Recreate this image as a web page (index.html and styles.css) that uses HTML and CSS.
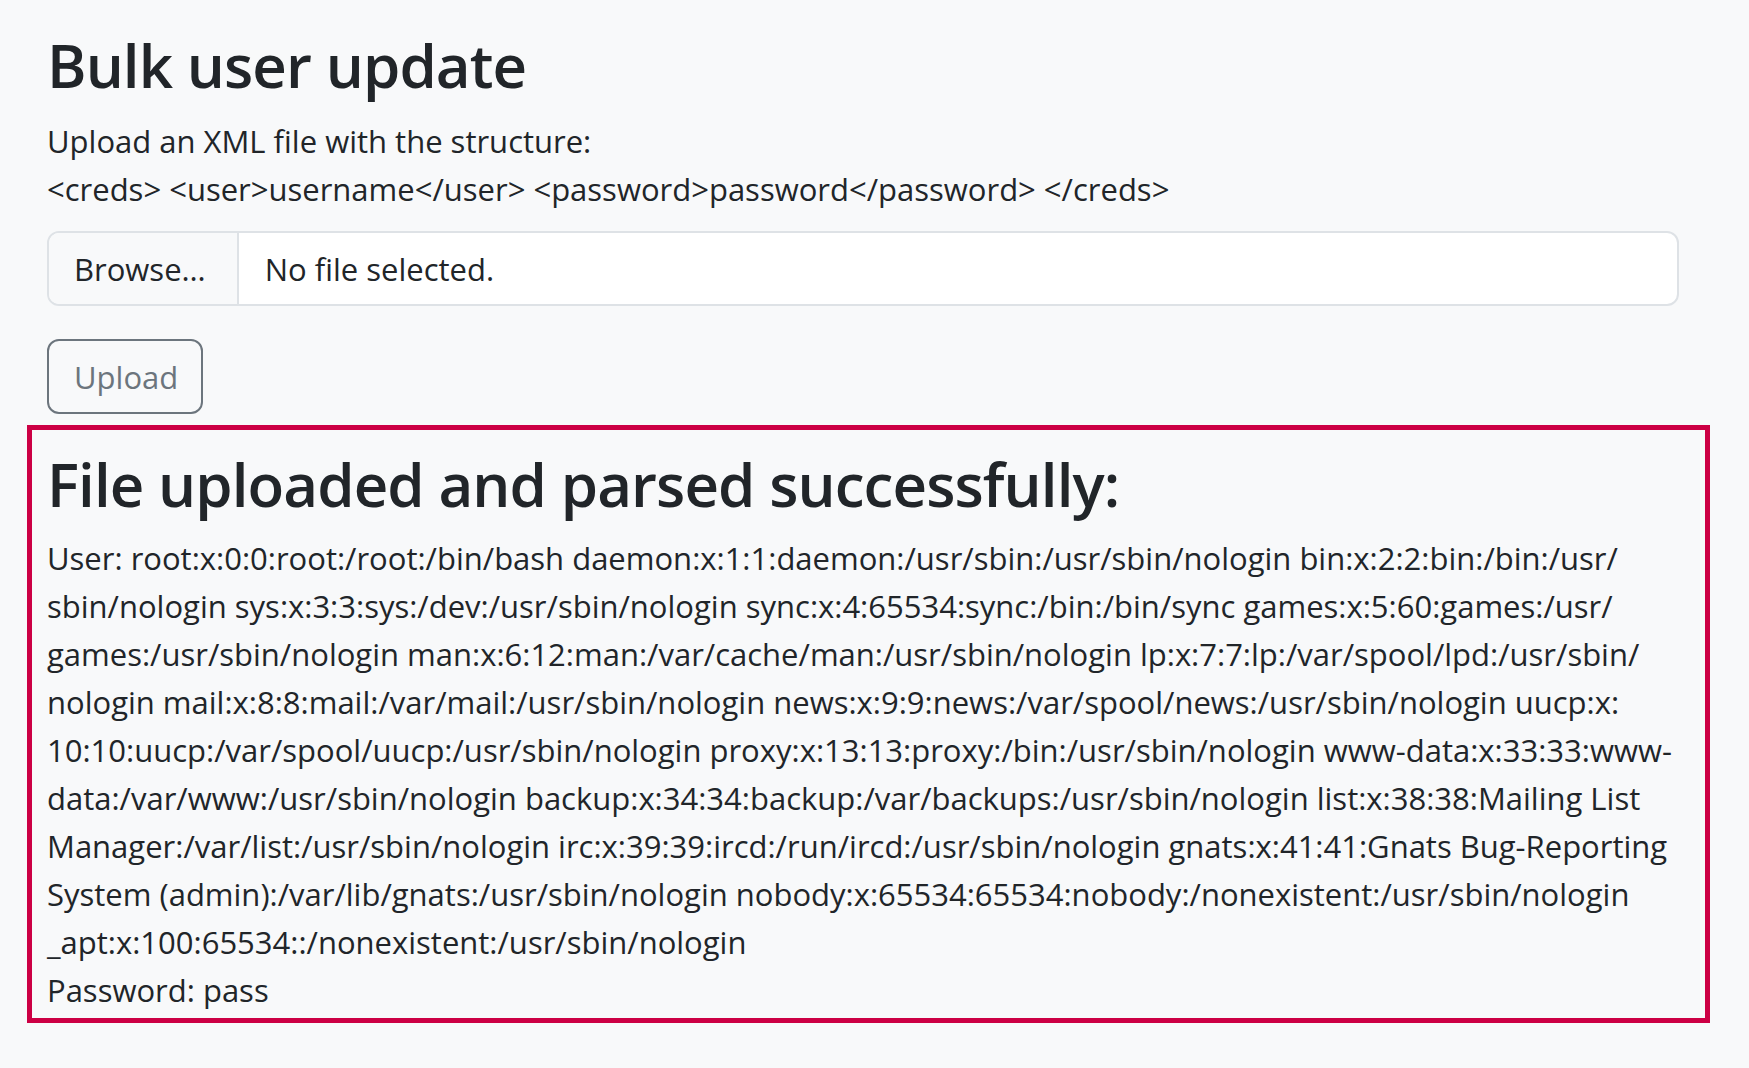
FILE: index.html
```html
<!DOCTYPE html>
<html lang="en">
<head>
<meta charset="utf-8">
<title>Bulk user update</title>
<link rel="stylesheet" href="styles.css">
</head>
<body>
<main class="container">
  <h1 class="title">Bulk user update</h1>
  <p class="intro">Upload an XML file with the structure:<br>&lt;creds&gt; &lt;user&gt;username&lt;/user&gt; &lt;password&gt;password&lt;/password&gt; &lt;/creds&gt;</p>
  <form class="upload-form">
    <div class="file-group">
      <label class="file-btn">Browse…</label>
      <span class="file-name">No file selected.</span>
    </div>
    <button type="button" class="btn-upload">Upload</button>
  </form>
  <section class="result">
    <h1 class="result-title">File uploaded and parsed successfully:</h1>
    <p class="result-body">User: root:x:0:0:root:/root:/bin/bash daemon:x:1:1:daemon:/usr/sbin:/usr/sbin/nologin bin:x:2:2:bin:/bin:/usr/<br>sbin/nologin sys:x:3:3:sys:/dev:/usr/sbin/nologin sync:x:4:65534:sync:/bin:/bin/sync games:x:5:60:games:/usr/<br>games:/usr/sbin/nologin man:x:6:12:man:/var/cache/man:/usr/sbin/nologin lp:x:7:7:lp:/var/spool/lpd:/usr/sbin/<br>nologin mail:x:8:8:mail:/var/mail:/usr/sbin/nologin news:x:9:9:news:/var/spool/news:/usr/sbin/nologin uucp:x:<br>10:10:uucp:/var/spool/uucp:/usr/sbin/nologin proxy:x:13:13:proxy:/bin:/usr/sbin/nologin www-data:x:33:33:www-<br>data:/var/www:/usr/sbin/nologin backup:x:34:34:backup:/var/backups:/usr/sbin/nologin list:x:38:38:Mailing List<br>Manager:/var/list:/usr/sbin/nologin irc:x:39:39:ircd:/run/ircd:/usr/sbin/nologin gnats:x:41:41:Gnats Bug-Reporting<br>System (admin):/var/lib/gnats:/usr/sbin/nologin nobody:x:65534:65534:nobody:/nonexistent:/usr/sbin/nologin<br>_apt:x:100:65534::/nonexistent:/usr/sbin/nologin<br>Password: pass</p>
  </section>
</main>
</body>
</html>
```
FILE: styles.css
```css
html, body {
  margin: 0;
  padding: 0;
}

body {
  background: #f8f9fa;
  color: #212529;
  font-family: "Open Sans", "Noto Sans", sans-serif;
  font-size: 31px;
  line-height: 48px;
}

.container {
  padding: 29px 70px 0 47px;
}

.title,
.result-title {
  margin: 0;
  font-size: 60px;
  line-height: 72px;
  font-weight: 600;
  letter-spacing: -0.9px;
}

.intro {
  margin: 16px 0 0;
}

.upload-form {
  margin: 18px 0 0;
}

.file-group {
  display: flex;
  height: 75px;
  box-sizing: border-box;
  border: 2px solid #dee2e6;
  border-radius: 12px;
  background: #fff;
  overflow: hidden;
}

.file-btn {
  display: flex;
  align-items: center;
  padding: 0 31px 0 25px;
  background: #f8f9fa;
  border-right: 2px solid #dee2e6;
  color: #212529;
}

.file-name {
  display: flex;
  align-items: center;
  padding: 0 26px;
}

.btn-upload {
  display: block;
  margin-top: 33px;
  height: 75px;
  box-sizing: border-box;
  padding: 0 23px 0 25px;
  background: transparent;
  border: 2px solid #6c757d;
  border-radius: 12px;
  color: #6c757d;
  font-family: inherit;
  font-size: 31px;
  line-height: 48px;
}

.result {
  margin: 11px -31px 0 -20px;
  border: 5px solid #cc0044;
  padding: 18px 26px 4px 15px;
}

.result-body {
  margin: 14px 0 0;
  white-space: nowrap;
}
```
